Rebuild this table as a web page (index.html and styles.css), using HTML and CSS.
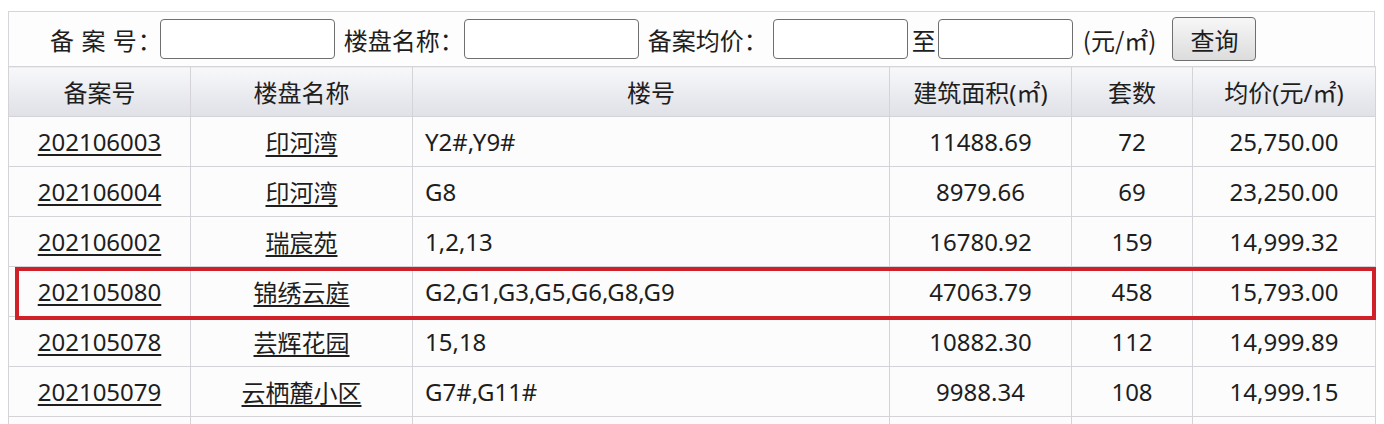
FILE: index.html
```html
<!DOCTYPE html>
<html>
<head>
  <meta charset="utf-8">
  <link rel="stylesheet" href="styles.css">
</head>
<body>
  <div class="panel">
    <form class="search">
      <label class="search-label label-code">备 案 号：</label>
      <input class="field field-wide" type="text">
      <label class="search-label label-name">楼盘名称：</label>
      <input class="field field-wide" type="text">
      <label class="search-label label-price">备案均价：</label>
      <input class="field field-narrow" type="text">
      <span class="to">至</span>
      <input class="field field-narrow" type="text">
      <span class="unit">(元/㎡)</span>
      <button class="search-btn" type="button">查询</button>
    </form>

    <div class="grid-wrap">
      <table class="grid">
        <colgroup>
          <col class="c-code">
          <col class="c-name">
          <col class="c-build">
          <col class="c-area">
          <col class="c-count">
          <col class="c-price">
        </colgroup>
        <thead>
          <tr>
            <th>备案号</th>
            <th>楼盘名称</th>
            <th>楼号</th>
            <th>建筑面积(㎡)</th>
            <th>套数</th>
            <th>均价(元/㎡)</th>
          </tr>
        </thead>
        <tbody>
          <tr>
            <td><a href="#">202106003</a></td>
            <td><a href="#">印河湾</a></td>
            <td class="left">Y2#,Y9#</td>
            <td>11488.69</td>
            <td>72</td>
            <td>25,750.00</td>
          </tr>
          <tr>
            <td><a href="#">202106004</a></td>
            <td><a href="#">印河湾</a></td>
            <td class="left">G8</td>
            <td>8979.66</td>
            <td>69</td>
            <td>23,250.00</td>
          </tr>
          <tr>
            <td><a href="#">202106002</a></td>
            <td><a href="#">瑞宸苑</a></td>
            <td class="left">1,2,13</td>
            <td>16780.92</td>
            <td>159</td>
            <td>14,999.32</td>
          </tr>
          <tr>
            <td><a href="#">202105080</a></td>
            <td><a href="#">锦绣云庭</a></td>
            <td class="left">G2,G1,G3,G5,G6,G8,G9</td>
            <td>47063.79</td>
            <td>458</td>
            <td>15,793.00</td>
          </tr>
          <tr>
            <td><a href="#">202105078</a></td>
            <td><a href="#">芸辉花园</a></td>
            <td class="left">15,18</td>
            <td>10882.30</td>
            <td>112</td>
            <td>14,999.89</td>
          </tr>
          <tr>
            <td><a href="#">202105079</a></td>
            <td><a href="#">云栖麓小区</a></td>
            <td class="left">G7#,G11#</td>
            <td>9988.34</td>
            <td>108</td>
            <td>14,999.15</td>
          </tr>
          <tr class="next">
            <td></td>
            <td></td>
            <td></td>
            <td></td>
            <td></td>
            <td></td>
          </tr>
        </tbody>
      </table>
      <!-- marked row -->
      <div class="mark"></div>
    </div>
  </div>
</body>
</html>
```

FILE: styles.css
```css
body {
  margin: 0;
  padding: 11px 9px 0 8px;
  background: #ffffff;
  color: #1e1e1e;
  font-family: "Noto Sans", "Noto Sans CJK SC", sans-serif;
  font-size: 24px;
}

.panel {
  width: 1367px;
}

.search {
  display: flex;
  align-items: center;
  height: 55px;
  margin: 0;
  padding-left: 41px;
  border: 1px solid #d6d6da;
  border-bottom: none;
  background: #fdfdfd;
  box-sizing: border-box;
}

.search-label {
  font-family: "Noto Sans CJK SC", sans-serif;
  white-space: nowrap;
}

.label-code {
  letter-spacing: 1px;
  margin-right: -3px;
}

.label-name {
  margin-right: 0;
}

.label-price {
  margin-right: 5px;
}

.field {
  height: 40px;
  border: 1px solid #6f6f6f;
  border-radius: 4px;
  background: #ffffff;
  box-sizing: border-box;
  margin-right: 9px;
}

.field-wide {
  width: 175px;
}

.field-narrow {
  width: 135px;
}

.field-narrow + .to {
  margin-left: -5px;
  margin-right: 2px;
}

.to {
  font-family: "Noto Sans CJK SC", sans-serif;
}

.unit {
  margin-left: 1px;
  margin-right: 16px;
  font-family: "Noto Sans CJK SC", sans-serif;
}

.search-btn {
  width: 84px;
  height: 44px;
  padding: 0;
  border: 1px solid #6f6f6f;
  border-radius: 4px;
  background: linear-gradient(#f7f7f7, #dcdcdc);
  color: #1e1e1e;
  font-family: "Noto Sans CJK SC", sans-serif;
  font-size: 24px;
}

.grid-wrap {
  position: relative;
}

.grid {
  width: 1367px;
  border-collapse: collapse;
  table-layout: fixed;
}

.c-code { width: 182px; }
.c-name { width: 222px; }
.c-build { width: 477px; }
.c-area { width: 182px; }
.c-count { width: 121px; }
.c-price { width: 183px; }

.grid th,
.grid td {
  height: 50px;
  padding: 0;
  border: 1px solid #d3d3d8;
  text-align: center;
  white-space: nowrap;
  box-sizing: border-box;
}

.grid th {
  font-weight: normal;
  background: linear-gradient(#f8f8fa, #dfe1e7);
}

.grid td {
  background: #fcfcfd;
}

.grid td.left {
  text-align: left;
  padding-left: 12px;
}

.grid a {
  color: #1e1e1e;
  text-decoration: underline;
  text-decoration-thickness: 2px;
  text-underline-offset: 3px;
}

.mark {
  position: absolute;
  left: 7px;
  top: 201px;
  width: 1361px;
  height: 53px;
  border: 4px solid #d0202a;
  box-sizing: border-box;
  pointer-events: none;
}
```
